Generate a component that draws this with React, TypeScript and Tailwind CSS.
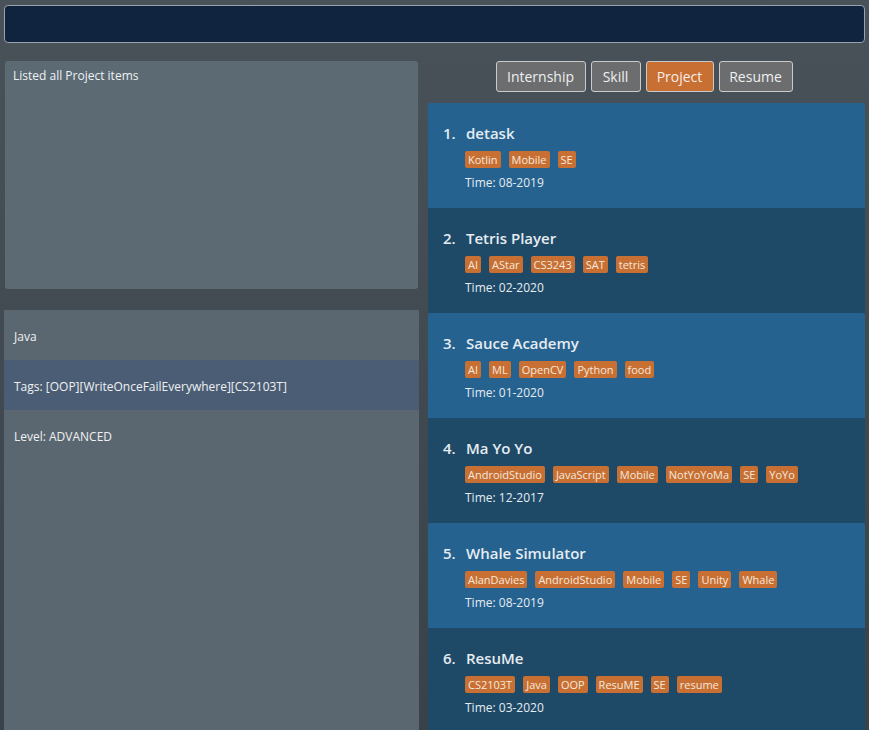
import React from 'react';

type Project = {
  title: string;
  tags: string[];
  time: string;
};

const PROJECTS: Project[] = [
  { title: 'detask', tags: ['Kotlin', 'Mobile', 'SE'], time: '08-2019' },
  { title: 'Tetris Player', tags: ['AI', 'AStar', 'CS3243', 'SAT', 'tetris'], time: '02-2020' },
  { title: 'Sauce Academy', tags: ['AI', 'ML', 'OpenCV', 'Python', 'food'], time: '01-2020' },
  { title: 'Ma Yo Yo', tags: ['AndroidStudio', 'JavaScript', 'Mobile', 'NotYoYoMa', 'SE', 'YoYo'], time: '12-2017' },
  { title: 'Whale Simulator', tags: ['AlanDavies', 'AndroidStudio', 'Mobile', 'SE', 'Unity', 'Whale'], time: '08-2019' },
  { title: 'ResuMe', tags: ['CS2103T', 'Java', 'OOP', 'ResuME', 'SE', 'resume'], time: '03-2020' },
];

// tab buttons keep the widths they have in the app
const TABS = [
  { label: 'Internship', w: 'w-[90px]' },
  { label: 'Skill', w: 'w-[50px]' },
  { label: 'Project', w: 'w-[68px]' },
  { label: 'Resume', w: 'w-[74px]' },
];

const ProjectCard: React.FC<{ item: Project; index: number }> = ({ item, index }) => {
  const odd = index % 2 === 0;
  return (
    <div className={`h-[105px] pl-[15px] pt-[20px] ${odd ? 'bg-[#256290] rounded-t-[2px]' : 'bg-[#1e4a68]'}`}>
      <div className="flex items-baseline text-[15px] leading-[20px] text-[#e6ecf1] font-semibold">
        <span className="w-[20px]">{index + 1}.</span>
        <span className="pl-[3px]">{item.title}</span>
      </div>
      <div className="flex gap-[8px] mt-[8px] pl-[22px]">
        {item.tags.map(t => (
          <span key={t} className="bg-[#c87033] text-[#f4e8de] text-[11px] leading-[17px] px-[3px] rounded-[2px]">
            {t}
          </span>
        ))}
      </div>
      <div className="mt-[7px] pl-[22px] text-[12px] leading-[16px] text-[#e6ecf1]">Time: {item.time}</div>
    </div>
  );
};

export default function App() {
  return (
    <div
      className="w-[869px] h-[730px] overflow-hidden bg-gradient-to-b from-[#4a5259] to-[#3a4249] text-white px-[4px] pt-[5px]"
      style={{ fontFamily: '"Open Sans", "Noto Sans", sans-serif' }}
    >
      {/* command box */}
      <div className="h-[38px] bg-[#10233f] border border-[#9aa3ab] rounded-[4px]"></div>

      <div className="flex mt-[18px] gap-[9px]">
        {/* left column */}
        <div className="w-[415px] flex flex-col">
          <div className="ml-[1px] w-[413px] h-[228px] bg-[#5c6a73] rounded-[3px] px-[8px] pt-[6px] text-[12px] text-[#eef1f3]">
            Listed all Project items
          </div>
          <div className="mt-[21px] h-[430px] bg-[#5b6770] text-[12px] text-[#eef1f3]">
            <div className="h-[50px] flex items-center pt-[3px] px-[10px]">Java</div>
            <div className="h-[50px] flex items-center pt-[3px] px-[10px] bg-[#4b5d74]">Tags: [OOP][WriteOnceFailEverywhere][CS2103T]</div>
            <div className="h-[50px] flex items-center pt-[3px] px-[10px]">Level: ADVANCED</div>
          </div>
        </div>

        {/* right column */}
        <div className="w-[437px] flex flex-col">
          <div className="h-[31px] flex justify-center gap-[5px] pr-[5px]">
            {TABS.map(t => (
              <button
                key={t.label}
                className={`${t.w} h-[31px] text-[14px] text-center rounded-[3px] border border-[#c8cbce] ${t.label === 'Project' ? 'bg-[#c86f34] text-[#f7eee6]' : 'bg-[#6c6d6e] text-[#eef0f1]'}`}
              >
                {t.label}
              </button>
            ))}
          </div>
          <div className="mt-[11px] flex flex-col">
            {PROJECTS.map((p, i) => (
              <ProjectCard key={p.title} item={p} index={i} />
            ))}
          </div>
        </div>
      </div>
    </div>
  );
}
